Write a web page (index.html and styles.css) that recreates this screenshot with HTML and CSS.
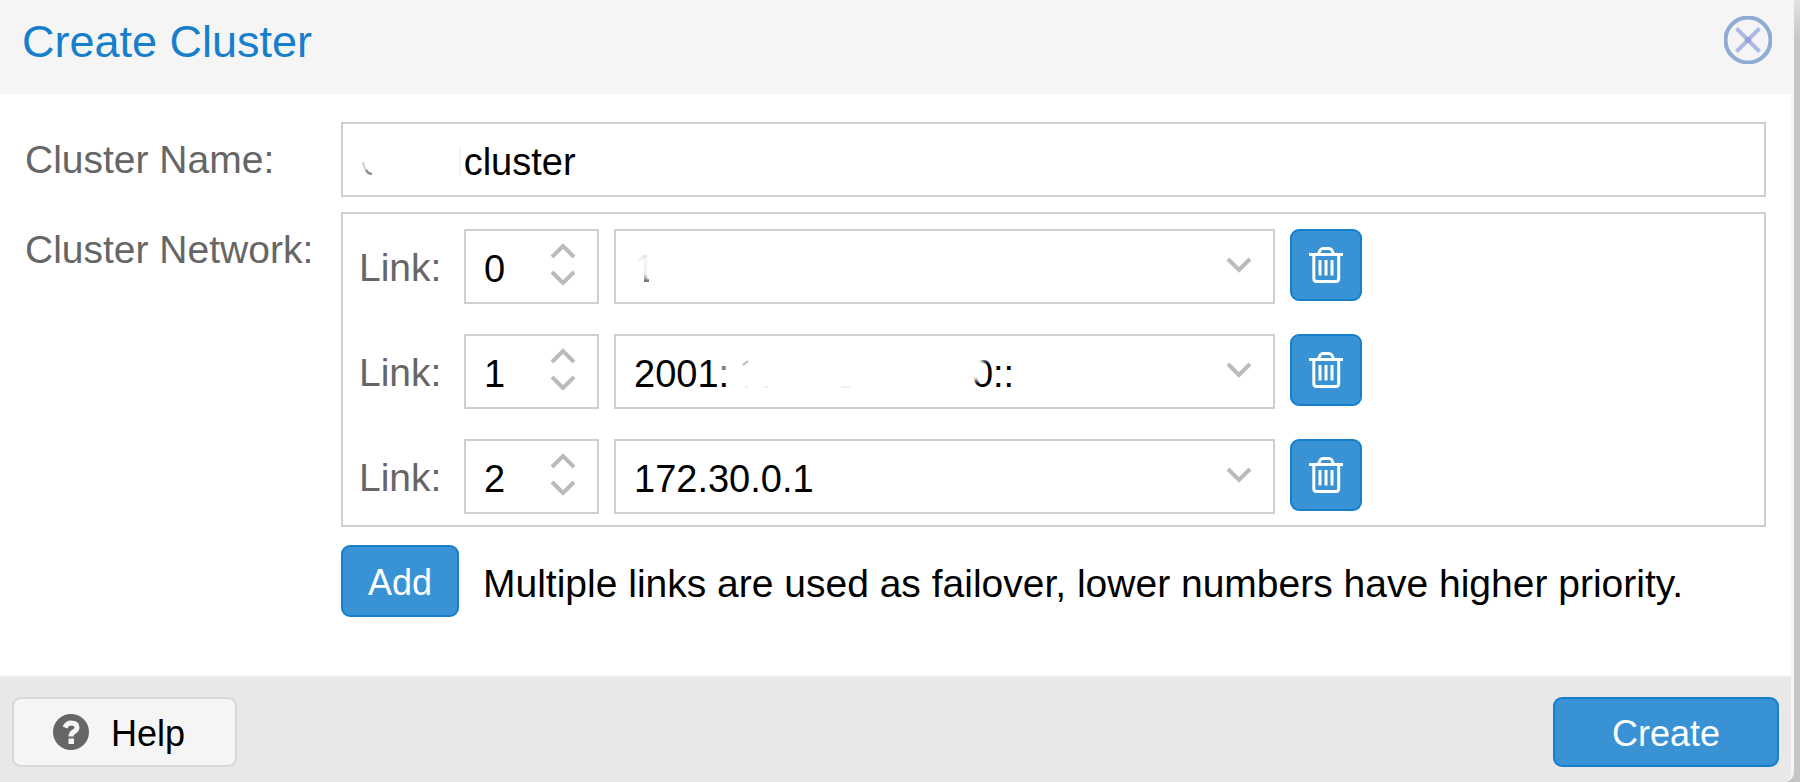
FILE: index.html
```
<!DOCTYPE html>
<html lang="en">
<head>
    <meta charset="UTF-8">
    <meta name="viewport" content="width=device-width, initial-scale=1.0">
    <title>Create Cluster</title>
    <link rel="stylesheet" href="styles.css">
</head>
<body>
    <svg class="defs" width="0" height="0" aria-hidden="true">
        <filter id="soft" x="-50%" y="-50%" width="200%" height="200%"><feGaussianBlur stdDeviation="2"/></filter>
        <symbol id="up" viewBox="0 0 26 18"><path d="M2 15 13 4 24 15" fill="none" stroke="currentColor" stroke-width="4"/></symbol>
        <symbol id="down" viewBox="0 0 26 18"><path d="M2 3 13 14 24 3" fill="none" stroke="currentColor" stroke-width="4"/></symbol>
        <symbol id="trash" viewBox="0 0 34 36">
            <g fill="none" stroke="currentColor">
                <path d="M0 7.500H34M9.500 7 11 3.300Q12 1.500 14 1.500H20Q22 1.500 23 3.300L24.500 7" stroke-width="3"/>
                <path d="M4.800 8V31.500Q4.800 34.500 7.800 34.500H26.700Q29.700 34.500 29.700 31.500V8" stroke-width="3"/>
                <path d="M11 13V28.500M17 13V28.500M23 13V28.500" stroke-width="3"/>
            </g>
        </symbol>
    </svg>

    <form class="dialog">
        <header class="header">
            <h1>Create Cluster</h1>
            <button type="button" class="close" aria-label="Close">
                <svg width="48" height="48" viewBox="0 0 48 48" fill="none">
                    <circle cx="24" cy="24" r="22.500" stroke="#8eabd2" stroke-width="4"/>
                    <path d="M12.500 12.500 35.500 35.500M35.500 12.500 12.500 35.500" stroke="#adb9e0" stroke-width="4"/>
                    <circle cx="24" cy="24" r="3" fill="#8fa2d6"/>
                </svg>
            </button>
        </header>

        <div class="content">
            <label class="label" for="clusterName">Cluster Name:</label>
            <div class="field">
                <input class="box" type="text" id="clusterName" value="&nbsp;&nbsp;&nbsp;&nbsp;&nbsp;&nbsp;&nbsp;&nbsp;&nbsp;&thinsp;cluster">
                <svg class="smudge" width="130" height="75" viewBox="0 0 130 75" fill="none" aria-hidden="true">
                    <path d="M22 40Q23 49 31 52" stroke="#ccc" stroke-width="2"/>
                    <path d="M25 48Q27 52 31 52" stroke="#888" stroke-width="2"/>
                    <path d="M119 26V53" stroke="#f2f2f2" stroke-width="2"/>
                </svg>
            </div>

            <span class="label" id="networkLabel">Cluster Network:</span>
            <fieldset class="links" aria-labelledby="networkLabel">
                <div class="link">
                    <label class="link-label" for="link0">Link:</label>
                    <div class="field number">
                        <input class="box" type="number" id="link0" value="0" min="0">
                        <div class="spinner">
                            <button type="button" aria-label="Increase"><svg><use href="#up"/></svg></button>
                            <button type="button" aria-label="Decrease"><svg><use href="#down"/></svg></button>
                        </div>
                    </div>
                    <div class="field address">
                        <select class="box" aria-label="Address of link 0"><option>1</option></select>
                        <svg class="smudge" width="60" height="75" viewBox="0 0 60 75" aria-hidden="true">
                            <defs>
                                <linearGradient id="fade" x1="0" y1="0" x2="0" y2="1">
                                    <stop offset="0" stop-color="#fff" stop-opacity=".85"/>
                                    <stop offset=".2" stop-color="#fff" stop-opacity=".95"/>
                                    <stop offset=".65" stop-color="#fff" stop-opacity=".95"/>
                                    <stop offset="1" stop-color="#fff" stop-opacity=".2"/>
                                </linearGradient>
                            </defs>
                            <rect x="18" y="24" width="30" height="32" fill="url(#fade)"/>
                            <path d="M18 40H30V60H18ZM35 24H48V60H35Z" fill="#fff"/>
                        </svg>
                        <svg class="arrow"><use href="#down"/></svg>
                    </div>
                    <button type="button" class="blue trash" aria-label="Remove link 0"><svg><use href="#trash"/></svg></button>
                </div>
                <div class="link">
                    <label class="link-label" for="link1">Link:</label>
                    <div class="field number">
                        <input class="box" type="number" id="link1" value="1" min="0">
                        <div class="spinner">
                            <button type="button" aria-label="Increase"><svg><use href="#up"/></svg></button>
                            <button type="button" aria-label="Decrease"><svg><use href="#down"/></svg></button>
                        </div>
                    </div>
                    <div class="field address">
                        <select class="box" aria-label="Address of link 1"><option>2001:&nbsp;&nbsp;&nbsp;&nbsp;&nbsp;&nbsp;&nbsp;&nbsp;&nbsp;&nbsp;&nbsp;&nbsp;&nbsp;&nbsp;&nbsp;&nbsp;&nbsp;&nbsp;&nbsp;&nbsp;&nbsp;&nbsp;&nbsp;0::</option></select>
                        <svg class="smudge" width="400" height="75" viewBox="0 0 400 75" aria-hidden="true">
                            <rect x="108" y="24" width="8" height="22" fill="#fff" opacity=".5"/>
                            <ellipse cx="361" cy="34" rx="10" ry="13" fill="#fff" filter="url(#soft)"/>
                            <path d="M129 31 134 27" stroke="#bbb" stroke-width="2"/>
                            <path d="M131 53H134M150 53H154M227 53H236" stroke="#ddd" stroke-width="1"/>
                        </svg>
                        <svg class="arrow"><use href="#down"/></svg>
                    </div>
                    <button type="button" class="blue trash" aria-label="Remove link 1"><svg><use href="#trash"/></svg></button>
                </div>
                <div class="link">
                    <label class="link-label" for="link2">Link:</label>
                    <div class="field number">
                        <input class="box" type="number" id="link2" value="2" min="0">
                        <div class="spinner">
                            <button type="button" aria-label="Increase"><svg><use href="#up"/></svg></button>
                            <button type="button" aria-label="Decrease"><svg><use href="#down"/></svg></button>
                        </div>
                    </div>
                    <div class="field address">
                        <select class="box" aria-label="Address of link 2"><option>172.30.0.1</option></select>
                        <svg class="arrow"><use href="#down"/></svg>
                    </div>
                    <button type="button" class="blue trash" aria-label="Remove link 2"><svg><use href="#trash"/></svg></button>
                </div>
            </fieldset>

            <div class="add-row">
                <button type="button" class="blue add">Add</button>
                <span class="hint">Multiple links are used as failover, lower numbers have higher priority.</span>
            </div>
        </div>

        <footer class="footer">
            <button type="button" class="help">
                <svg width="36" height="36" viewBox="0 0 36 36" aria-hidden="true">
                    <circle cx="18" cy="18" r="18" fill="#666"/>
                    <path d="M12 13.500Q14 9 18 9Q24 9 24 13.500Q24 16 21 17.800Q18 19.500 18 22.500" fill="none" stroke="#f5f5f5" stroke-width="5"/>
                    <rect x="15.500" y="24.500" width="5.500" height="5.500" fill="#f5f5f5"/>
                </svg>
                <span>Help</span>
            </button>
            <button type="submit" class="blue create">Create</button>
        </footer>
    </form>
    <script>
        document.querySelectorAll('.spinner').forEach(spinner => {
            const input = spinner.previousElementSibling;
            const [up, down] = spinner.children;
            up.onclick = () => input.stepUp();
            down.onclick = () => input.stepDown();
        });
    </script>
</body>
</html>
```

FILE: styles.css
```
* {
    box-sizing: border-box;
}

body {
    margin: 0;
    padding-right: 6px;
    background: linear-gradient(#e2e2e2, #c6c6c6 40px);
    font-family: "Liberation Sans", Arial, sans-serif;
    font-size: 39px;
    line-height: 44px;
    color: #000;
}

.defs {
    position: absolute;
}

svg {
    display: block;
}

input,
select,
button {
    margin: 0;
    font: inherit;
    color: inherit;
}

button {
    padding: 0;
    border: none;
    background: none;
    cursor: pointer;
}

.dialog {
    display: flex;
    flex-direction: column;
    min-height: 100vh;
    border-right: 3px solid #f5f5f5;
    border-radius: 0 0 10px 0;
    background: #fff;
    overflow: hidden;
}

.header {
    display: flex;
    justify-content: space-between;
    align-items: flex-start;
    height: 94px;
    padding: 16px 19px 0 22px;
    background: #f5f5f5;
}

h1 {
    margin: 0;
    font-size: 45px;
    line-height: 52px;
    font-weight: normal;
    color: #157fcc;
}

.content {
    flex: 1;
    display: grid;
    grid-template-columns: 316px 1fr;
    align-content: start;
    row-gap: 15px;
    padding: 28px 25px 58px 25px;
}

.label {
    padding-top: 16px;
    color: #666;
}

.field {
    position: relative;
}

.box {
    display: block;
    width: 100%;
    height: 75px;
    padding: 6px 18px 0;
    border: 2px solid #cfcfcf;
    border-radius: 0;
    background: #fff;
    font-size: 38px;
    appearance: none;
}

select.box {
    padding-top: 4px;
}

input[type="number"] {
    appearance: textfield;
}

.smudge {
    position: absolute;
    top: 0;
    left: 0;
    pointer-events: none;
}

.links {
    display: flex;
    flex-direction: column;
    gap: 30px;
    min-width: 0;
    margin: 0;
    padding: 15px 16px 11px 16px;
    border: 2px solid #cfcfcf;
}

.link {
    display: flex;
    gap: 15px;
}

.link-label {
    width: 90px;
    padding-top: 17px;
    color: #666;
}

.number {
    width: 135px;
}

.spinner {
    position: absolute;
    top: 13px;
    right: 23px;
    display: grid;
    gap: 9px;
    color: #bbb;
}

.spinner button,
.spinner svg,
.arrow {
    width: 26px;
    height: 18px;
}

.spinner button {
    color: inherit;
}

.address {
    flex: 0 1 661px;
}

.arrow {
    position: absolute;
    top: 27px;
    right: 23px;
    color: #bbb;
    pointer-events: none;
}

.blue {
    border: 2px solid #157fcc;
    border-radius: 9px;
    background: #3892d4;
    color: #fff;
}

.trash {
    display: grid;
    place-items: center;
    width: 72px;
    height: 72px;
}

.trash svg {
    width: 34px;
    height: 36px;
}

.add-row {
    grid-column: 2;
    display: flex;
    align-items: center;
    gap: 24px;
    padding-top: 3px;
}

.hint {
    padding-top: 6px;
}

.add {
    flex: none;
    width: 118px;
    height: 72px;
    padding-top: 4px;
    font-size: 36px;
}

.footer {
    display: flex;
    justify-content: space-between;
    padding: 20px 12px 15px 12px;
    border-top: 2px solid #f5f5f5;
    background: #e8e8e8;
    font-size: 36px;
}

.help {
    display: flex;
    align-items: center;
    gap: 22px;
    height: 70px;
    padding: 0 50px 0 39px;
    border: 2px solid #d8d8d8;
    border-radius: 9px;
    background: #f5f5f5;
}

.help span {
    padding-top: 4px;
}

.create {
    width: 226px;
    height: 70px;
    padding-top: 4px;
}
```
